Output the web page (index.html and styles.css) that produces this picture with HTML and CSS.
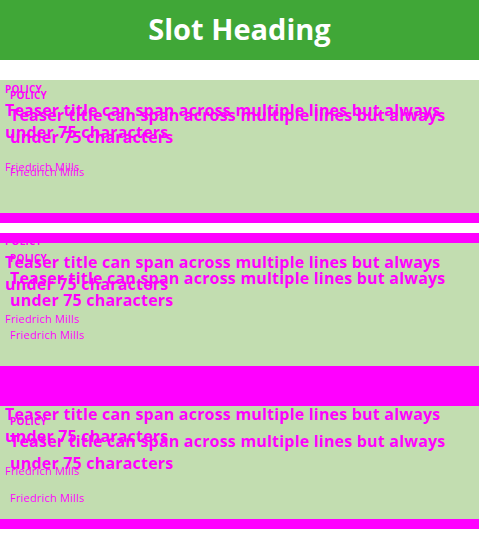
FILE: index.html
```html
<!DOCTYPE html>
<html>
<head>
<meta charset="utf-8">
<link rel="stylesheet" href="styles.css">
</head>
<body>
<div class="page">
  <header class="slot-heading">Slot Heading</header>
  <div class="spacer"></div>
  <div class="bands">
    <div class="band card card-1"></div>
    <div class="band mark thin"></div>
    <div class="band blank thin"></div>
    <div class="band mark thin"></div>
    <div class="band card card-2"></div>
    <div class="band mark thick"></div>
    <div class="band card card-3"></div>
    <div class="band mark thin"></div>
  </div>

  <div class="ghost ghost-a">
    <article class="teaser">
      <div class="label">POLICY</div>
      <h3 class="title">Teaser title can span across multiple lines but always under 75 characters</h3>
      <div class="author">Friedrich Mills</div>
    </article>
    <article class="teaser">
      <div class="label">POLICY</div>
      <h3 class="title">Teaser title can span across multiple lines but always under 75 characters</h3>
      <div class="author">Friedrich Mills</div>
    </article>
    <article class="teaser">
      <div class="label">POLICY</div>
      <h3 class="title">Teaser title can span across multiple lines but always under 75 characters</h3>
      <div class="author">Friedrich Mills</div>
    </article>
  </div>

  <div class="ghost ghost-b">
    <article class="teaser">
      <div class="label">POLICY</div>
      <h3 class="title">Teaser title can span across multiple lines but always under 75 characters</h3>
      <div class="author">Friedrich Mills</div>
    </article>
    <article class="teaser">
      <div class="label">POLICY</div>
      <h3 class="title">Teaser title can span across multiple lines but always under 75 characters</h3>
      <div class="author">Friedrich Mills</div>
    </article>
    <article class="teaser">
      <div class="label">POLICY</div>
      <h3 class="title">Teaser title can span across multiple lines but always under 75 characters</h3>
      <div class="author">Friedrich Mills</div>
    </article>
  </div>
</div>
</body>
</html>
```

FILE: styles.css
```css
html, body {
  margin: 0;
  padding: 0;
  background: #ffffff;
}

body {
  font-family: "Open Sans", Lato, "Liberation Sans", sans-serif;
}

.page {
  position: relative;
  width: 479px;
  min-height: 559px;
}

.slot-heading {
  height: 60px;
  background: #40a737;
  color: #ffffff;
  font-weight: 700;
  font-size: 29px;
  line-height: 58px;
  text-align: center;
}

.spacer {
  height: 20px;
}

.bands {
  display: flex;
  flex-direction: column;
}

.card { background: #c2ddb0; }
.card-1 { height: 133px; }
.card-2 { height: 123px; }
.card-3 { height: 113px; }
.mark { background: #ff00ff; }
.blank { background: #ffffff; }
.thin { height: 10px; }
.thick { height: 40px; }

.ghost {
  position: absolute;
  left: 0;
  top: 80px;
  width: 479px;
  color: #ff00ff;
}

.teaser {
  box-sizing: border-box;
  display: flex;
  flex-direction: column;
}

.label {
  font-size: 10px;
  line-height: 12px;
  font-weight: 700;
  text-transform: uppercase;
  letter-spacing: 0.2px;
}

.title {
  margin: 0;
  font-size: 16px;
  line-height: 22px;
  font-weight: 700;
  letter-spacing: 0.2px;
}

.author {
  font-size: 11px;
  line-height: 13px;
  font-weight: 400;
  letter-spacing: 0.2px;
}

.ghost-a .teaser {
  height: 152px;
  padding: 3px 0 0 5px;
}
.ghost-a .title { margin-top: 4px; }
.ghost-a .author { margin-top: 17px; }

.ghost-b .teaser {
  height: 163px;
  padding: 9px 0 0 10px;
}
.ghost-b .title { margin-top: 3px; }
.ghost-b .author { margin-top: 17px; }
```
